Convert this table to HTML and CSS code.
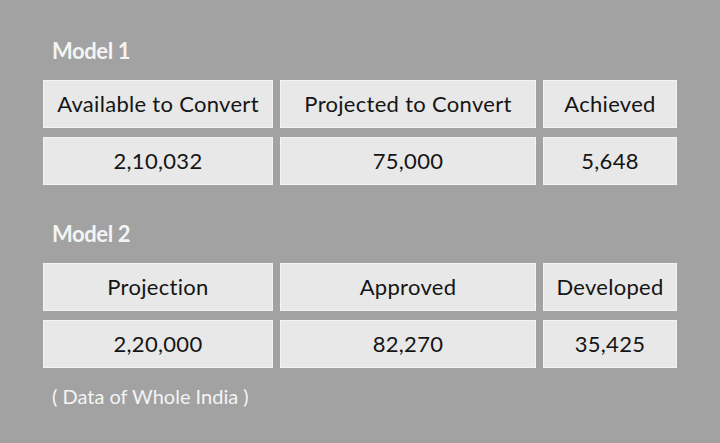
FILE: index.html
```html
<!DOCTYPE html>
<html>
<head>
<meta charset="utf-8">
<link rel="stylesheet" href="styles.css">
</head>
<body>
<div class="page">
  <section class="model">
    <h2 class="title">Model 1</h2>
    <div class="grid">
      <div class="cell">Available to Convert</div>
      <div class="cell">Projected to Convert</div>
      <div class="cell">Achieved</div>
      <div class="cell">2,10,032</div>
      <div class="cell">75,000</div>
      <div class="cell">5,648</div>
    </div>
  </section>
  <section class="model model2">
    <h2 class="title">Model 2</h2>
    <div class="grid">
      <div class="cell">Projection</div>
      <div class="cell">Approved</div>
      <div class="cell">Developed</div>
      <div class="cell">2,20,000</div>
      <div class="cell">82,270</div>
      <div class="cell">35,425</div>
    </div>
  </section>
  <p class="note">( Data of Whole India )</p>
</div>
</body>
</html>
```
FILE: styles.css
```css
html, body {
  margin: 0;
  padding: 0;
}
body {
  background: #a2a2a2;
  width: 720px;
  height: 443px;
  overflow: hidden;
  font-family: Lato, "Open Sans", sans-serif;
}
.page {
  padding: 36px 0 0 43px;
}
.title {
  margin: 0 0 0 9px;
  font-size: 22px;
  font-weight: 700;
  letter-spacing: -0.4px;
  color: #f4f4f4;
  line-height: 30px;
  height: 44px;
}
.model2 {
  margin-top: 34px;
}
.grid {
  display: grid;
  grid-template-columns: 230px 256px 134px;
  grid-auto-rows: 48px;
  column-gap: 7px;
  row-gap: 9px;
}
.cell {
  box-sizing: border-box;
  background: #e8e8e8;
  border: 1px solid #f4f4f4;
  display: flex;
  align-items: center;
  justify-content: center;
  font-size: 22px;
  font-weight: 400;
  letter-spacing: 0.3px;
  color: #151515;
  white-space: nowrap;
  padding-bottom: 1px;
}
.note {
  margin: 16px 0 0 9px;
  font-size: 20px;
  font-weight: 400;
  line-height: 24px;
  color: #f4f4f4;
}
```
